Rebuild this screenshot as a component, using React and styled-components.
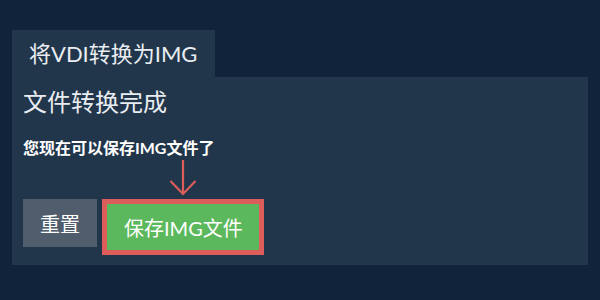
import React from "react";
import styled, { createGlobalStyle } from "styled-components";

const GlobalStyle = createGlobalStyle`
  html, body {
    margin: 0;
    padding: 0;
    background-color: #10233a;
  }
  body {
    font-family: Lato, "Noto Sans CJK SC", sans-serif;
    color: #eef1f4;
  }
`;

const Page = styled.div`
  padding: 30px 12px 0;
`;

const Tab = styled.div`
  display: inline-block;
  background-color: #22364b;
  padding: 0 18px 0 17px;
  height: 47px;
  line-height: 47px;
  font-size: 22px;
  color: #e9edf1;
`;

const Panel = styled.div`
  background-color: #22364b;
  padding: 10px 10px 10px 11px;
  display: flex;
  flex-direction: column;
  align-items: flex-start;
`;

const Heading = styled.h2`
  margin: 0;
  font-size: 24px;
  font-weight: normal;
  line-height: 29px;
  color: #e9edf1;
`;

const Message = styled.p`
  margin: 22px 0 0;
  font-size: 16px;
  font-weight: bold;
  line-height: 19px;
  color: #ffffff;
`;

const Actions = styled.div`
  display: flex;
  align-items: flex-start;
  gap: 5px;
  margin-top: 42px;
`;

const Button = styled.button`
  font-family: inherit;
  font-size: 20px;
  color: #ffffff;
  border-radius: 0;
  cursor: pointer;
  background-color: ${({ $variant }) =>
    $variant === "success" ? "#5cb85c" : "#4f5d6d"};
  height: ${({ $highlight }) => ($highlight ? "56px" : "48px")};
  padding: 0 ${({ $highlight }) => ($highlight ? "16px 0 17px" : "17px")};
  border: ${({ $highlight }) => ($highlight ? "5px solid #dc5d5a" : "none")};
`;

const SaveWrap = styled.div`
  position: relative;
`;

const Pointer = styled.svg`
  position: absolute;
  left: 50%;
  bottom: 100%;
  margin-bottom: 3px;
  transform: translateX(-50%);
`;

const DownArrow = () => (
  <Pointer width="28" height="36" viewBox="0 0 28 36" fill="none">
    <path
      d="M14 0 V34 M1.5 21 L14 34 L26.5 21"
      stroke="#dc5d5a"
      strokeWidth="2.2"
    />
  </Pointer>
);

const App = () => {
  return (
    <>
      <GlobalStyle />
      <Page>
        <Tab>将VDI转换为IMG</Tab>
        <Panel>
          <Heading>文件转换完成</Heading>
          <Message>您现在可以保存IMG文件了</Message>
          <Actions>
            <Button>重置</Button>
            <SaveWrap>
              <DownArrow />
              <Button $variant="success" $highlight>
                保存IMG文件
              </Button>
            </SaveWrap>
          </Actions>
        </Panel>
      </Page>
    </>
  );
};

export default App;
